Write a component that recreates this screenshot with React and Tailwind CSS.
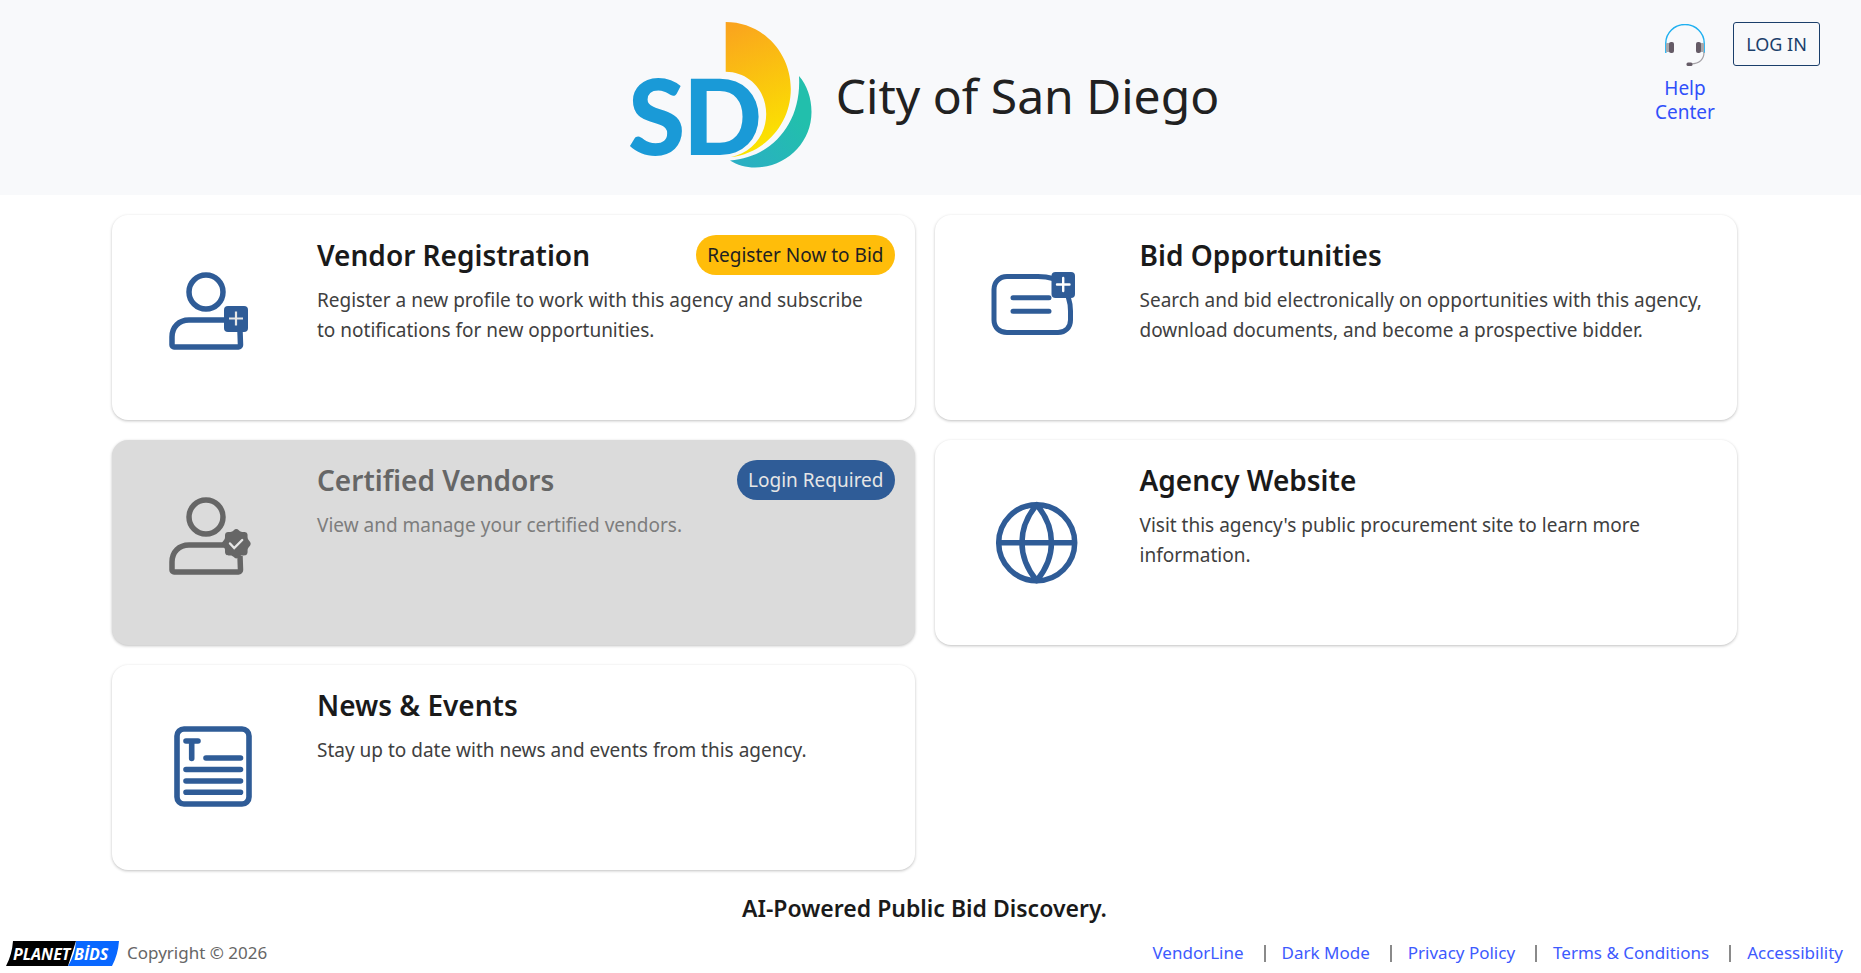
function UserBase() {
  return (
    <g fill="none" stroke="currentColor" strokeWidth="5.5">
      <circle cx="58" cy="35" r="17" />
      <path d="M41 63h36M92 74l0.5 14a2 2 0 0 1-2 2H26a2 2 0 0 1-2-2v-8C24 70 31 63 41 63" />
    </g>
  );
}

function RegisterIcon() {
  return (
    <svg viewBox="0 0 120 120" className="size-[120px]" aria-hidden="true">
      <UserBase />
      <rect x="76" y="49" width="24" height="26" rx="4" fill="currentColor" />
      <path d="M81 61.500h14M88 54.500v14" stroke="#e6e6e6" strokeWidth="2.2" />
    </svg>
  );
}

function CertifiedIcon() {
  return (
    <svg viewBox="0 0 120 120" className="size-[120px]" aria-hidden="true">
      <UserBase />
      <path
        fill="currentColor"
        d="M88.300 47c2 0 3 2.300 5 2.800 2 .5 4-.4 5.400 1 1.400 1.400.6 3.500 1 5.500.5 2 3 3.200 3 5.400s-2.500 3.400-3 5.400c-.4 2 .4 4.100-1 5.500-1.400 1.400-3.400.5-5.400 1-2 .5-3 2.800-5 2.800s-3-2.300-5-2.800c-2-.5-4 .4-5.400-1-1.400-1.400-.6-3.500-1-5.500-.5-2-3-3.200-3-5.400s2.500-3.400 3-5.400c.4-2-.4-4.100 1-5.500 1.400-1.400 3.400-.5 5.400-1 2-.5 3-2.800 5-2.800z"
      />
      <path d="M82 61.500l4.200 4.500 8-8" fill="none" stroke="#e6e6e6" strokeWidth="2.4" strokeLinecap="round" />
    </svg>
  );
}

function BidIcon() {
  return (
    <svg viewBox="0 0 120 120" className="size-[120px]" aria-hidden="true">
      <g fill="none" stroke="currentColor" strokeWidth="5" strokeLinecap="round">
        <path d="M82 21.500C77 20 72 19.500 67 19.500H36C28.500 19.500 23 25 23 32.500V63C23 70.500 28.500 75.500 36 75.500H87C94.500 75.500 99.500 70.500 99.500 63V54C99.500 49 98.800 45 97.500 41" />
        <path d="M42 40.700h36M42 54.300h36" />
      </g>
      <rect x="80.500" y="15" width="23.500" height="26" rx="4" fill="currentColor" />
      <path d="M86 27.500h12.500M92.200 21v13" stroke="#fff" strokeWidth="2.400" strokeLinecap="round" />
    </svg>
  );
}

function GlobeIcon() {
  return (
    <svg viewBox="0 0 120 120" className="size-[120px]" aria-hidden="true">
      <g fill="none" stroke="currentColor" strokeWidth="5.5" strokeLinejoin="round">
        <circle cx="65.700" cy="60.700" r="38" />
        <path d="M28 60.700h76M65.700 22.700C46 46 46 75 65.700 98.700C85.400 75 85.400 46 65.700 22.700z" />
      </g>
    </svg>
  );
}

function NewsIcon() {
  return (
    <svg viewBox="0 0 120 120" className="size-[120px]" aria-hidden="true">
      <g fill="none" stroke="currentColor" strokeWidth="5.600" strokeLinecap="round">
        <rect x="29" y="22" width="72" height="75" rx="7" />
        <path d="M38 34h12M43.700 34v17.500M58 51h34.500M38 62.500h54.500M38 74h54.500M38 85.300h54.500" />
      </g>
    </svg>
  );
}

function CityLogo() {
  return (
    <svg viewBox="0 0 182 146" className="h-[146px] w-[182px] overflow-visible" role="img" aria-label="SD">
      <defs>
        <linearGradient id="sun" x1="0" y1="0" x2="0.200" y2="1">
          <stop offset="0" stopColor="#faa21f" />
          <stop offset="1" stopColor="#fbe400" />
        </linearGradient>
        <linearGradient id="sea" x1="1" y1="0" x2="0" y2="1">
          <stop offset="0.300" stopColor="#22bfac" />
          <stop offset="1" stopColor="#2cadc6" />
        </linearGradient>
      </defs>
      <path fill="url(#sun)" d="M95.700 0C132 0 160.800 30 160.800 67C160.800 102 135 131 101 135C121 131 136.200 114 136.200 92C136.200 68 119 50 95.700 49.700Z" />
      <path fill="url(#sea)" d="M169 54C177 63 181.500 76 181.500 90C181.500 121 156 145.500 125 145.500C116 145.500 107 143 100 138.500C140 136 172 103 169 54Z" />
      <g fill="#1a9ad7" className="font-[Lato] text-[104px] font-black">
        <text x="-2" y="133">S</text>
        <text x="53" y="133">D</text>
      </g>
    </svg>
  );
}

function HeadsetIcon() {
  return (
    <svg viewBox="0 0 40 43" className="h-[43px] w-10" aria-hidden="true">
      <path d="M.8 29V19a19.200 18.500 0 0 1 38.400 0V29" fill="none" stroke="#1fb0f0" strokeWidth="1.400" />
      <path d="M39 28c0 8-5 11.500-13 12" fill="none" stroke="#a3a0a5" strokeWidth="1.200" />
      <rect x="1" y="19" width="4.500" height="9" rx="1" fill="#a9a7aa" />
      <rect x="34.500" y="19" width="4.500" height="9" rx="1" fill="#a9a7aa" />
      <rect x="4" y="18" width="5" height="11" rx="2" fill="#655b66" />
      <rect x="31" y="18" width="5" height="11" rx="2" fill="#655b66" />
      <rect x="21.500" y="38.500" width="6" height="3.500" rx="1.500" fill="#655b66" />
    </svg>
  );
}

function PlanetBidsLogo() {
  return (
    <svg viewBox="0 0 114 25" className="h-[25px] w-[114px]" role="img" aria-label="PlanetBids">
      <path d="M7 0H70L62 25H0Q6 14 7 0Z" fill="#000" />
      <path d="M70 0H113Q112 14 106 25H62Q69 14 70 0Z" fill="#0867ff" />
      <g fill="#fff" className="font-['Open_Sans'] text-[16px] font-bold italic">
        <text x="7" y="19">PLANET</text>
        <text x="68" y="19">BİDS</text>
      </g>
    </svg>
  );
}

const cards = [
  {
    title: "Vendor Registration",
    text: "Register a new profile to work with this agency and subscribe to notifications for new opportunities.",
    icon: RegisterIcon,
    badge: "Register Now to Bid",
    badgeClass: "bg-[#ffbd0a] text-[#212121]",
  },
  {
    title: "Bid Opportunities",
    text: "Search and bid electronically on opportunities with this agency, download documents, and become a prospective bidder.",
    icon: BidIcon,
  },
  {
    title: "Certified Vendors",
    text: "View and manage your certified vendors.",
    icon: CertifiedIcon,
    badge: "Login Required",
    badgeClass: "bg-[#2f5c97] text-[#e6e6e6]",
    disabled: true,
  },
  {
    title: "Agency Website",
    text: "Visit this agency's public procurement site to learn more information.",
    icon: GlobeIcon,
  },
  {
    title: "News & Events",
    text: "Stay up to date with news and events from this agency.",
    icon: NewsIcon,
  },
];

function Card({ title, text, icon: Icon, badge, badgeClass, disabled }) {
  return (
    <a
      href="#"
      aria-disabled={disabled}
      className={
        "flex min-h-[205px] rounded-2xl shadow-[0_1px_3px_rgba(0,0,0,0.25)] " +
        (disabled ? "bg-[#dbdbdb] text-[#666]" : "bg-white text-[#2f5c97]")
      }
    >
      <div className="flex w-[205px] shrink-0 items-center pb-px pl-9">
        <Icon />
      </div>
      <div className="flex-1 py-5 pr-5">
        <div className="flex h-10 items-center justify-between">
          <h2 className={"text-[28px] font-semibold " + (disabled ? "text-[#666]" : "text-[#1a1a1a]")}>{title}</h2>
          {badge && (
            <span className={"flex h-10 items-center rounded-full px-[11px] text-[19px] " + badgeClass}>{badge}</span>
          )}
        </div>
        <p className={"mt-[10px] pr-3 text-[19px] leading-[30px] " + (disabled ? "text-[#7d7d7d]" : "text-[#404040]")}>{text}</p>
      </div>
    </a>
  );
}

const links = ["VendorLine", "Dark Mode", "Privacy Policy", "Terms & Conditions", "Accessibility"];

export default function App() {
  return (
    <div className="flex min-h-screen flex-col bg-white font-['Noto_Sans',sans-serif]">
      <header className="relative flex h-[195px] justify-center bg-[#f8f9fb] pt-[22px] pr-3">
        <div className="flex items-start gap-6">
          <CityLogo />
          <h1 className="pt-[38px] text-[48px] leading-[72px] text-[#212121]">City of San Diego</h1>
        </div>
        <div className="absolute top-[22px] right-[41px] flex items-start gap-4">
          <a href="#" className="flex w-16 flex-col items-center pt-[2px] text-center text-[19px] leading-6 text-[#3050fa]">
            <HeadsetIcon />
            <span className="pt-[9px]">Help Center</span>
          </a>
          <button className="h-11 w-[87px] rounded-[3px] border border-[#1b3f6b] text-[18px] whitespace-nowrap text-[#1b3f6b]">
            LOG IN
          </button>
        </div>
      </header>
      <main className="grid grid-cols-2 gap-5 pt-5 pr-[124px] pl-28">
        {cards.map((c) => (
          <Card key={c.title} {...c} />
        ))}
      </main>
      <p className="pt-5 pr-3 text-center text-[23px] leading-9 font-semibold text-[#1a1a1a]">AI-Powered Public Bid Discovery.</p>
      <footer className="flex items-center justify-between pt-[11px] pr-[18px] pl-[6px] text-[17px] leading-8">
        <div className="flex items-center gap-[7px] text-[#666]">
          <PlanetBidsLogo />
          <span>Copyright © 2026</span>
        </div>
        <nav className="flex items-center">
          {links.map((l, i) => (
            <span key={l} className="flex items-center">
              {i > 0 && <span className="mr-4 ml-5 h-[17px] w-[2px] bg-[#8a8a8a]" />}
              <a href="#" className="text-[#3d5afe]">{l}</a>
            </span>
          ))}
        </nav>
      </footer>
    </div>
  );
}
